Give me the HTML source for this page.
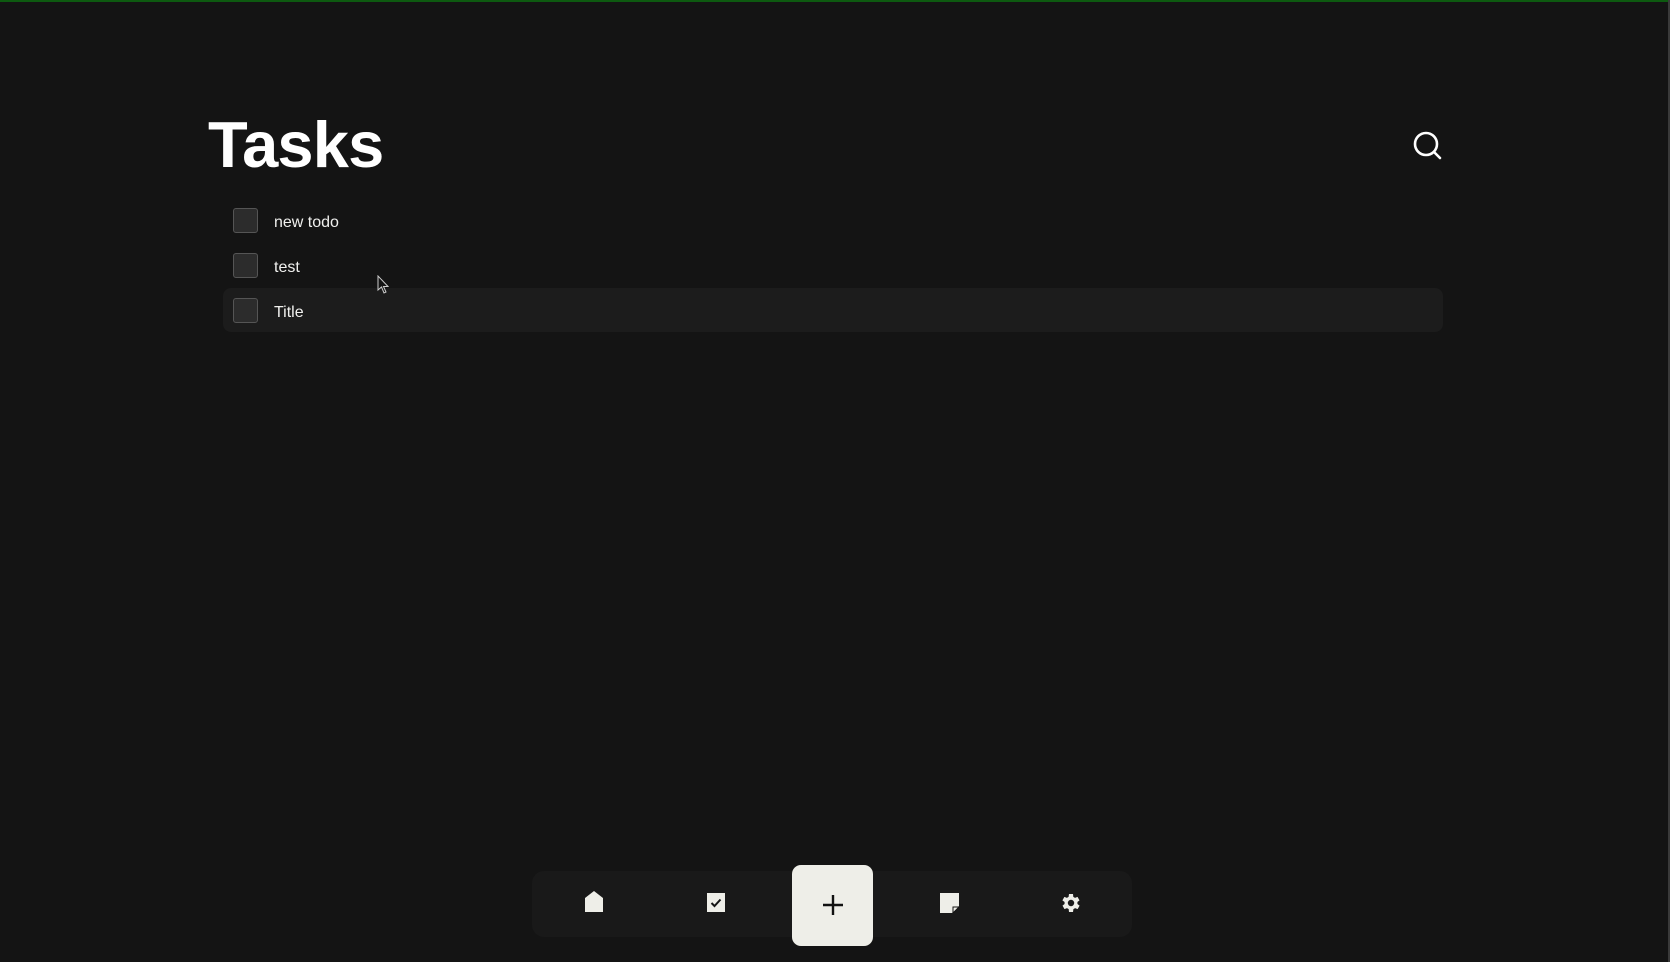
<!DOCTYPE html>
<html><head><meta charset="utf-8"><style>
html,body{margin:0;padding:0}
body{width:1670px;height:962px;background:#141414;position:relative;overflow:hidden;font-family:"Liberation Sans",Arial,sans-serif;color:#f2f2ee}
.top{position:absolute;left:0;top:0;width:1670px;height:2px;background:#0d5a10}
.rb{position:absolute;right:0;top:0;width:2px;height:962px;background:#3a3a3a}
h1{position:absolute;left:208px;top:107px;margin:0;font-size:65px;font-weight:bold;letter-spacing:-0.8px;color:#fff}
.row{position:absolute;left:223px;width:1220px;height:44px}
.row.hl{background:#1c1c1c;border-radius:8px}
.cb{position:absolute;left:10px;top:10px;width:23px;height:23px;border:1.5px solid #555;border-radius:3px;background:#2c2c2c}
.lbl{position:absolute;left:51px;top:16px;font-size:16px;color:#f0f0ee}
.bar{position:absolute;left:532px;top:871px;width:600px;height:66px;background:#191919;border-radius:12px}
.plus{position:absolute;left:792px;top:865px;width:81px;height:81px;background:#eeeee8;border-radius:9px}
svg{position:absolute}
</style></head><body>
<div class="top"></div><div class="rb"></div>
<h1>Tasks</h1>
<svg style="left:1412px;top:130px" width="32" height="32" viewBox="0 0 32 32"><circle cx="14" cy="14" r="11" fill="none" stroke="#fff" stroke-width="2.6"/><line x1="22" y1="22" x2="28" y2="28" stroke="#fff" stroke-width="2.6" stroke-linecap="round"/></svg>
<div class="row" style="top:198px"><div class="cb"></div><div class="lbl">new todo</div></div>
<div class="row" style="top:243px"><div class="cb"></div><div class="lbl">test</div></div>
<div class="row hl" style="top:288px"><div class="cb"></div><div class="lbl">Title</div></div>
<svg style="left:377px;top:275px" width="14" height="20" viewBox="0 0 14 20"><path d="M1 1 L1 15 L4.5 12 L7 18 L9 17 L6.5 11.5 L11 11.5 Z" fill="#141414" stroke="#ccc" stroke-width="1"/></svg>
<div class="bar"></div>
<svg style="left:585px;top:891px" width="18" height="21" viewBox="0 0 18 21"><path d="M9 0 L18 7 L18 21 L0 21 L0 7 Z" fill="#eeeee8"/></svg>
<svg style="left:707px;top:893px" width="18" height="19" viewBox="0 0 18 19"><rect width="18" height="19" fill="#eeeee8"/><path d="M4.5 10 L7.5 13 L13.5 6.5" fill="none" stroke="#141414" stroke-width="2"/></svg>
<div class="plus"></div>
<svg style="left:820px;top:892px" width="26" height="26" viewBox="0 0 26 26"><path d="M13 3V23M3 13H23" stroke="#111" stroke-width="2.4"/></svg>
<svg style="left:940px;top:893px" width="19" height="20" viewBox="0 0 19 20"><path d="M0 0H19V13L12 20H0Z" fill="#eeeee8"/><path d="M13 20 L13 14 L19 14 Z" fill="#eeeee8" stroke="#141414" stroke-width="1"/></svg>
<svg style="left:1059px;top:891px" width="24" height="24" viewBox="0 0 24 24"><path fill="#eeeee8" d="M19.4 13a7.5 7.5 0 0 0 0-2l2.1-1.6-2-3.5-2.5 1a7.5 7.5 0 0 0-1.7-1L15 3h-4l-.4 2.9a7.5 7.5 0 0 0-1.7 1l-2.5-1-2 3.5L6.6 11a7.5 7.5 0 0 0 0 2l-2.1 1.6 2 3.5 2.5-1a7.5 7.5 0 0 0 1.7 1L11 21h4l.4-2.9a7.5 7.5 0 0 0 1.7-1l2.5 1 2-3.5zM13 15.2a3.2 3.2 0 1 1 0-6.4 3.2 3.2 0 0 1 0 6.4z" transform="translate(-1 0)"/></svg>
</body></html>
